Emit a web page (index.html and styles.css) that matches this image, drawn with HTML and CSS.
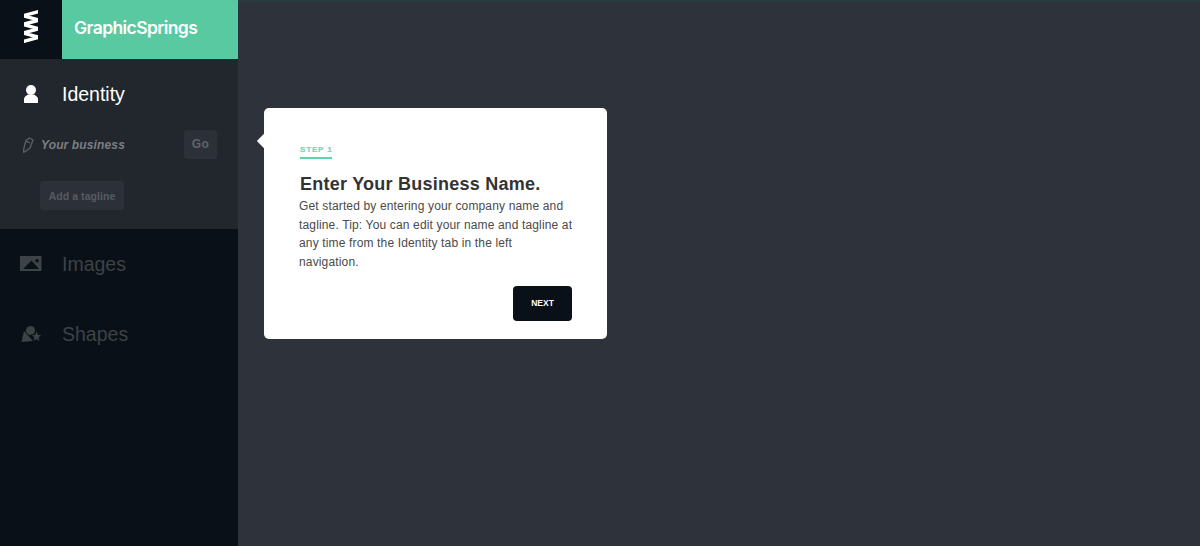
FILE: index.html
```html
<!DOCTYPE html>
<html lang="en">
<head>
<meta charset="utf-8">
<title>GraphicSprings</title>
<link rel="stylesheet" href="styles.css">
</head>
<body>
<div class="app">
  <aside class="sidebar">
    <div class="brand">
      <div class="brand-mark">
        <svg width="14" height="34" viewBox="0 0 14 34"><path fill="none" stroke="#fff" stroke-width="3.400" stroke-linejoin="miter" stroke-miterlimit="10" d="M15 2.500-1 6.800 15 11.100-1 15.400 15 19.700-1 24 15 28.300-1 32.600"/></svg>
      </div>
      <div class="brand-name">GraphicSprings</div>
    </div>
    <section class="identity">
      <div class="nav-item active">
        <svg class="nav-icon" width="22" height="20" viewBox="0 0 22 20"><circle cx="11" cy="6" r="5" fill="#fff"/><path fill="#fff" d="M4 18.500V15C4 13 6 12 8 10.500H14C16 12 18 13 18 15V18.500C18 19 17.500 19 17 19H5C4.500 19 4 19 4 18.500Z"/></svg>
        <span>Identity</span>
      </div>
      <div class="name-row">
        <div class="name-field">
          <svg class="pencil" width="12" height="16" viewBox="0 0 12 16"><path fill="none" stroke="#5c6166" stroke-width="1.300" d="M4 3.500 7.500 1 11 3 8 11 2.500 15 1.500 15 2 10.500ZM3.700 4 8 6"/></svg>
          <em>Your business</em>
        </div>
        <div class="btn-dim go">Go</div>
      </div>
      <div class="tagline-row"><div class="btn-dim tagline">Add a tagline</div></div>
    </section>
    <nav class="nav-list">
      <div class="nav-item dim">
        <svg class="nav-icon" width="22" height="16" viewBox="0 0 22 16"><path fill="#3d4246" fill-rule="evenodd" d="M0 0H21.500V15H0ZM3 13H19L11.500 4.500ZM17 3A1.800 1.800 0 1 0 17.100 6.600 1.800 1.800 0 0 0 17 3Z"/></svg>
        <span>Images</span>
      </div>
      <div class="nav-item dim">
        <svg class="nav-icon" width="22" height="18" viewBox="0 0 22 18"><path fill="#3d4246" d="M4 6 13 16 1.500 17Z"/><circle cx="10.500" cy="5.500" r="4.500" fill="#3d4246"/><path fill="#3d4246" stroke="#0a1017" stroke-width=".8" d="M16.500 5.500 18.100 9.500 22 9.800 19 12.500 20 16.800 16.500 14.500 13 16.800 14 12.500 11 9.800 14.900 9.500Z"/></svg>
        <span>Shapes</span>
      </div>
    </nav>
  </aside>
  <main class="main">
    <div class="tour-card">
      <div class="step-label">STEP 1</div>
      <h1>Enter Your Business Name.</h1>
      <p>Get started by entering your company name and tagline. Tip: You can edit your name and tagline at any time from the Identity tab in the left navigation.</p>
      <div class="card-actions"><div class="next">NEXT</div></div>
    </div>
  </main>
</div>
</body>
</html>
```
FILE: styles.css
```css
* { box-sizing: border-box; }
html, body { margin: 0; height: 100%; }
body { font-family: "Liberation Sans", Arial, sans-serif; background: #2e323b; overflow: hidden; }
.app { display: flex; height: 546px; }

.sidebar { width: 238px; flex: none; background: #0a1017; display: flex; flex-direction: column; }
.brand { display: flex; height: 59px; flex: none; }
.brand-mark { width: 62px; flex: none; display: flex; align-items: center; justify-content: center; padding: 0 0 7px 0; background: #0a1017; }
.brand-name { flex: 1; background: #58c9a0; color: #fff; font-family: Inter, sans-serif; font-weight: 600; font-size: 17.500px; letter-spacing: -0.6px; line-height: 56px; padding-left: 12px; }

.identity { height: 170px; flex: none; background: #22272d; display: flex; flex-direction: column; }
.nav-item { display: flex; align-items: center; height: 70px; padding-left: 20px; font-size: 19.500px; }
.nav-item span { margin-left: 20px; }
.nav-icon { width: 22px; flex: none; }
.nav-item.active { color: #fff; }
.nav-item.dim { color: #3d4246; }

.name-row { display: flex; align-items: center; height: 30px; padding-left: 22px; }
.name-field { width: 162px; display: flex; align-items: center; font-size: 12px; font-weight: 700; color: #7a7e82; letter-spacing: .13px; padding-top: 1px; }
.pencil { flex: none; margin-right: 7px; }
.btn-dim { background: #2c3139; color: #5f6468; font-size: 11px; font-weight: 700; border-radius: 3px; display: flex; align-items: center; justify-content: center; }
.go { width: 33px; height: 29px; font-size: 12px; letter-spacing: .3px; }
.tagline-row { margin-top: 22px; padding-left: 40px; }
.tagline { width: 84px; height: 29px; font-size: 10.500px; letter-spacing: .05px; color: #565b60; }

.nav-list { display: flex; flex-direction: column; }

.main { flex: 1; border-top: 2px solid #263c3f; padding: 106px 0 0 26px; }
.tour-card { position: relative; width: 343px; height: 231px; background: #fff; border-radius: 5px; padding: 37px 34px 0 35px; }
.tour-card::before { content: ""; position: absolute; left: -7px; top: 26px; width: 14px; height: 14px; background: #fff; transform: rotate(45deg) scale(.72); }
.step-label { width: 32px; margin-left: 1px; color: #6adcb2; font-size: 8px; font-weight: 700; letter-spacing: .85px; white-space: nowrap; line-height: 10px; -webkit-text-stroke: .2px #6adcb2; border-bottom: 2px solid #58d8a8; padding-bottom: 2px; }
h1 { margin: 15px 0 0 1px; color: #333; font-size: 18px; font-weight: 700; line-height: 21px; letter-spacing: .24px; }
p { margin: 2px 0 0; color: #4a4a4a; font-size: 12px; line-height: 18.670px; letter-spacing: .15px; }
.card-actions { display: flex; justify-content: flex-end; margin: 14px 1px 0 0; }
.next { width: 59px; height: 35px; background: #0a1017; border-radius: 4px; color: #fff; font-size: 8.500px; font-weight: 700; display: flex; align-items: center; justify-content: center; }
```
